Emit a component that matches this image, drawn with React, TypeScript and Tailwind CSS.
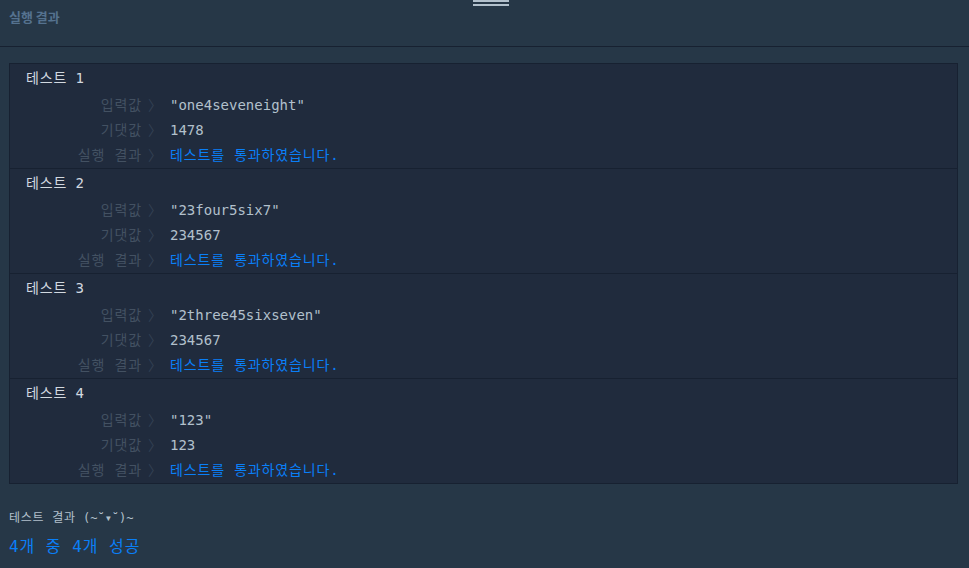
import React from 'react';

type TestCase = {
    input: string;
    expected: string;
};

const tests: TestCase[] = [
    { input: '"one4seveneight"', expected: '1478' },
    { input: '"23four5six7"', expected: '234567' },
    { input: '"2three45sixseven"', expected: '234567' },
    { input: '"123"', expected: '123' },
];

const mono = "font-['DejaVu_Sans_Mono','Noto_Sans_CJK_KR',monospace]";

/** Hangul in Noto CJK is ~0.92em; pad it out a little, like a coding font. */
function Ko({ children, className = '' }: { children: React.ReactNode; className?: string }) {
    return <span className={`tracking-[0.06em] ${className}`}>{children}</span>;
}

function Row({ label, children }: { label: string; children: React.ReactNode }) {
    return (
        <div className="flex h-[25px] items-center text-[14px]">
            <div className="w-[131px] shrink-0 text-right text-[#435162]">
                <Ko className="mr-[-1px]">{label}</Ko>
            </div>
            <div className="w-[29px] shrink-0 pl-[7px] text-[#334053]">〉</div>
            <div className="min-w-0 flex-1">{children}</div>
        </div>
    );
}

function TestBlock({ index, test }: { index: number; test: TestCase }) {
    return (
        <div className="h-[105px] border-t border-[#172131] pt-[2px] first:h-[104px] first:border-t-0">
            <div className="h-[25px] pl-[16px] text-[14px] leading-[25px] text-[#d2d9e0]">
                <Ko>테스트</Ko> {index}
            </div>
            <div className="mt-[2px]">
                <Row label="입력값">
                    <span className="text-[#b2c0cc]">{test.input}</span>
                </Row>
                <Row label="기댓값">
                    <span className="text-[#b2c0cc]">{test.expected}</span>
                </Row>
                <Row label="실행 결과">
                    <Ko className="text-[#0a7ff7]">테스트를 통과하였습니다.</Ko>
                </Row>
            </div>
        </div>
    );
}

export default function App() {
    return (
        <div className={`relative h-[568px] w-[969px] overflow-hidden bg-[#263747] ${mono}`}>
            {/* resize handle */}
            <div className="absolute left-[473px] top-0 flex w-[36px] flex-col gap-[2px]">
                <div className="h-[2px] bg-[#b2c0cc]" />
                <div className="h-[2px] bg-[#b2c0cc]" />
            </div>

            <div className="flex h-[47px] items-center border-b border-[#172131] pb-[12px] pl-[9px]">
                <span className="font-['Noto_Sans_CJK_KR',sans-serif] text-[13px] font-bold text-[#55728f]">
                    실행 결과
                </span>
            </div>

            <div className="mx-[9px] mt-[16px] w-[949px] border border-[#172131] bg-[#202b3d]">
                {tests.map((t, i) => (
                    <TestBlock key={i} index={i + 1} test={t} />
                ))}
            </div>

            <div className="mt-[25px] pl-[9px] text-[12px] text-[#b2c0cc]">
                <Ko>테스트 결과</Ko> (~˘▾˘)~
            </div>
            <div className="mt-[8px] pl-[9px] text-[16px] text-[#0a7ff7]">
                <Ko>4개 중 4개 성공</Ko>
            </div>
        </div>
    );
}
